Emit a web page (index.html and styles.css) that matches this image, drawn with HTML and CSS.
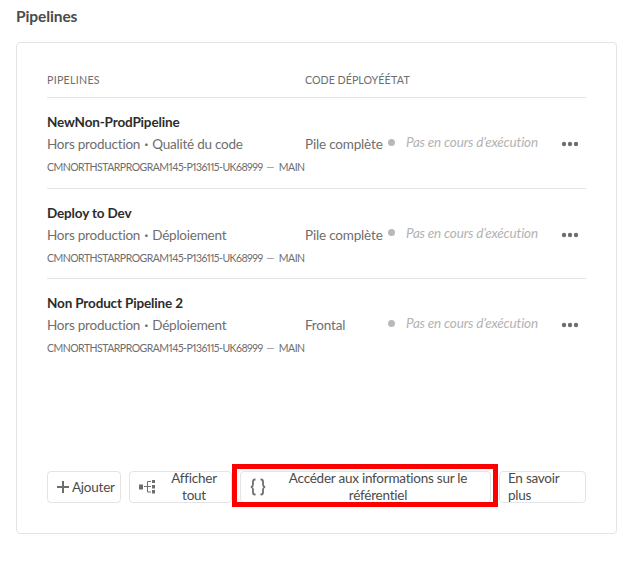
FILE: index.html
```html
<!DOCTYPE html>
<html lang="fr">
<head>
<meta charset="utf-8">
<title>Pipelines</title>
<link rel="stylesheet" href="styles.css">
</head>
<body>
<h1 class="title">Pipelines</h1>
<main class="card">
  <div class="table">
    <div class="row head"><span class="wide">Pipelines</span><span>Code déployé</span><span class="wide">État</span></div>
    <div class="row">
      <div class="info">
        <h2 class="name">NewNon-ProdPipeline</h2>
        <p class="kind">Hors production<span class="sep">·</span>Qualité du code</p>
        <p class="repo">CMNORTHSTARPROGRAM145-P136115-UK68999 <span class="dash">—</span> MAIN</p>
      </div>
      <div class="code">Pile complète</div>
      <div class="status"><i class="dot"></i><span>Pas en cours d’exécution</span></div>
      <svg class="more" viewBox="0 0 18 6"><circle cx="3" cy="3" r="2.2"/><circle cx="9" cy="3" r="2.2"/><circle cx="15" cy="3" r="2.2"/></svg>
    </div>
    <div class="row">
      <div class="info">
        <h2 class="name">Deploy to Dev</h2>
        <p class="kind">Hors production<span class="sep">·</span>Déploiement</p>
        <p class="repo">CMNORTHSTARPROGRAM145-P136115-UK68999 <span class="dash">—</span> MAIN</p>
      </div>
      <div class="code">Pile complète</div>
      <div class="status"><i class="dot"></i><span>Pas en cours d’exécution</span></div>
      <svg class="more" viewBox="0 0 18 6"><circle cx="3" cy="3" r="2.2"/><circle cx="9" cy="3" r="2.2"/><circle cx="15" cy="3" r="2.2"/></svg>
    </div>
    <div class="row">
      <div class="info">
        <h2 class="name">Non Product Pipeline 2</h2>
        <p class="kind">Hors production<span class="sep">·</span>Déploiement</p>
        <p class="repo">CMNORTHSTARPROGRAM145-P136115-UK68999 <span class="dash">—</span> MAIN</p>
      </div>
      <div class="code">Frontal</div>
      <div class="status"><i class="dot"></i><span>Pas en cours d’exécution</span></div>
      <svg class="more" viewBox="0 0 18 6"><circle cx="3" cy="3" r="2.2"/><circle cx="9" cy="3" r="2.2"/><circle cx="15" cy="3" r="2.2"/></svg>
    </div>
  </div>
  <div class="actions">
    <button class="btn add">
      <svg width="12" height="12" viewBox="0 0 12 12"><path d="M6 0v12M0 6h12" stroke="#6e6e6e" stroke-width="2"/></svg>
      <span>Ajouter</span>
    </button>
    <button class="btn all">
      <svg width="17" height="14" viewBox="0 0 17 14"><path fill="#6e6e6e" d="M0 4.500h4v5H0zM13 0h3v3H13zM13 5h3v3.500H13zM13 10h3v3.500H13z"/><path d="M5 6.500h7M12 1.500H8.500v10.500H12" fill="none" stroke="#6e6e6e"/></svg>
      <span>Afficher<br>tout</span>
    </button>
    <div class="repo-slot">
      <button class="btn access">
        <svg width="16" height="18" viewBox="0 0 16 18"><path d="M5.500 1.500H5Q3 1.500 3 3.500V6.500Q3 8.500 1 9Q3 9.500 3 11.500V14.500Q3 16.500 5 16.500H5.500M10.500 1.500H11Q13 1.500 13 3.500V6.500Q13 8.500 15 9Q13 9.500 13 11.500V14.500Q13 16.500 11 16.500H10.500" fill="none" stroke="#6e6e6e" stroke-width="1.800"/></svg>
        <span>Accéder aux informations sur le<br>référentiel</span>
      </button>
      <div class="highlight"></div>
    </div>
    <button class="btn learn"><span>En savoir<br>plus</span></button>
  </div>
</main>
</body>
</html>
```

FILE: styles.css
```css
* { box-sizing: border-box; }
body {
  margin: 0;
  padding: 6px 16px 0;
  background: #fff;
  color: #6e6e6e;
  font: 13.5px/20px Lato, "Noto Sans", sans-serif;
  letter-spacing: -0.180px;
}
h1, h2, p { margin: 0; }
.title {
  height: 36px;
  font-size: 15.5px;
  line-height: 21px;
  font-weight: 700;
  letter-spacing: -0.100px;
  color: #4b4b4b;
}
.card {
  display: flex;
  flex-direction: column;
  justify-content: space-between;
  width: 601px;
  height: 492px;
  padding: 26px 30px 30px;
  border: 1px solid #e4e4e4;
  border-radius: 4px;
}
.row {
  display: grid;
  grid-template-columns: 258px 83px 173px 1fr;
  height: 90.500px;
  border-bottom: 1px solid #e4e4e4;
  white-space: nowrap;
}
.row:last-child { border-bottom: 0; }
.head {
  grid-template-columns: 258px 79.500px 1fr;
  height: 29px;
  font-size: 10.7px;
  line-height: 22px;
  letter-spacing: 0;
  text-transform: uppercase;
}
.wide { letter-spacing: 0.250px; }
.info { padding-top: 13px; }
.name {
  font-size: 13.5px;
  line-height: 22px;
  font-weight: 700;
  letter-spacing: -0.150px;
  color: #2c2c2c;
}
.kind { line-height: 22px; letter-spacing: -0.230px; }
.sep { margin: 0 4.300px; font-weight: 700; }
.repo {
  font-size: 10.5px;
  line-height: 24px;
  letter-spacing: -0.520px;
  word-spacing: 1.2px;
  font-variant-numeric: lining-nums proportional-nums;
}
.dash {
  display: inline-block;
  color: #959595;
  letter-spacing: 0;
  margin-right: 1px;
}
.code { padding-top: 36px; }
.status {
  display: flex;
  align-items: center;
  height: 20px;
  margin-top: 34px;
  color: #b3b3b3;
  font-style: italic;
}
.dot {
  width: 7px;
  height: 7px;
  margin: 0 11px 0 0;
  border-radius: 50%;
  background: #b9b9b9;
}
.more { width: 18px; height: 6px; margin-top: 43px; fill: #6e6e6e; }
.actions { display: flex; height: 32px; }
.btn {
  display: flex;
  align-items: center;
  height: 32px;
  padding: 0;
  border: 1px solid #e4e4e4;
  border-radius: 4px;
  background: #fff;
  color: #4b4b4b;
  font: inherit;
  letter-spacing: -0.240px;
  line-height: 17px;
  white-space: nowrap;
}
.btn svg { flex: none; }
.add { width: 74px; margin-right: 8px; padding-left: 9px; gap: 3px; }
.all { width: 103px; margin-right: 8px; padding-left: 9px; }
.all span { width: 76px; padding-left: 1px; }
.repo-slot { position: relative; margin-right: 8px; }
.access { width: 251px; padding-left: 9px; }
.access span { flex: 1; }
.learn { width: 87px; padding-left: 8px; text-align: left; }
.highlight {
  position: absolute;
  left: -8px;
  top: -7px;
  width: 266px;
  height: 43px;
  border: 5px solid #f00;
}
```
